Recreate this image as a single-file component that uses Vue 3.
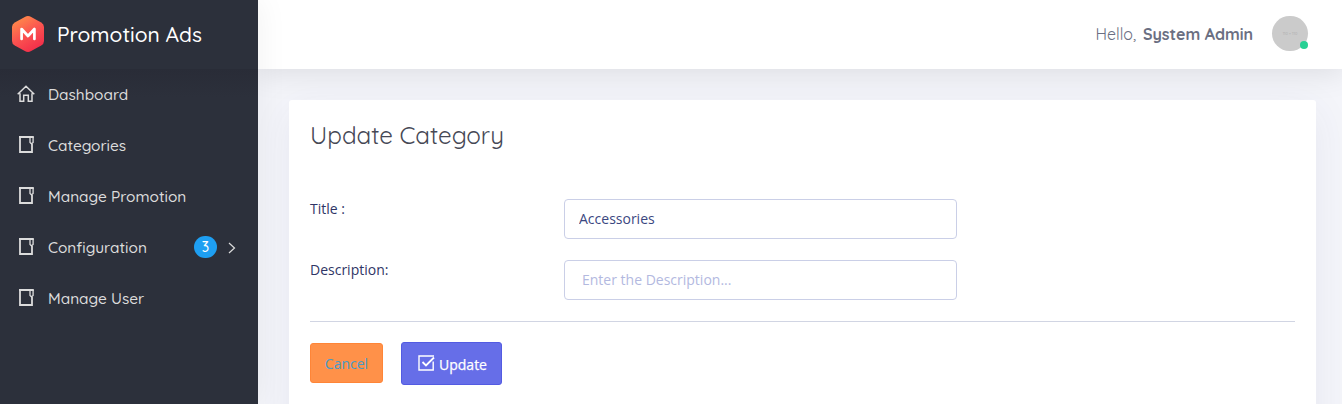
<script setup>
const items = [
  { label: 'Dashboard', icon: 'home' },
  { label: 'Categories', icon: 'book' },
  { label: 'Manage Promotion', icon: 'book' },
  { label: 'Configuration', icon: 'book', badge: 3 },
  { label: 'Manage User', icon: 'book' }
]
</script>

<template>
  <div class="app">
    <aside class="sidebar">
      <div class="brand">
        <svg class="logo" width="34" height="38" viewBox="0 0 34 38">
          <defs>
            <linearGradient id="brandFill" x1="0.15" y1="0" x2="0.7" y2="1">
              <stop offset="0" stop-color="#ff9149" />
              <stop offset="0.5" stop-color="#fb5550" />
              <stop offset="1" stop-color="#f22c4a" />
            </linearGradient>
          </defs>
          <path d="M13.8 1.9Q17 0.2 20.2 1.9L30.2 7.4Q33 9 33 12V26Q33 29 30.2 30.6L20.2 36.1Q17 37.8 13.8 36.1L3.8 30.6Q1 29 1 26V12Q1 9 3.8 7.4Z" fill="url(#brandFill)" />
          <path d="M10.6 24V14L17 21L23.4 14V24" fill="none" stroke="#fff" stroke-width="2.7" stroke-linecap="round" stroke-linejoin="round" />
        </svg>
        <span class="brand-text">Promotion Ads</span>
      </div>
      <nav class="menu">
        <a v-for="item in items" :key="item.label" class="menu-item">
          <svg v-if="item.icon === 'home'" class="icon" width="18" height="18" viewBox="0 0 18 18">
            <path d="M0.7 9.3L9 1.2L17.3 9.3M3 8.2V16.2H6.7V10.2H11.3V16.2H15V8.2" fill="none" stroke="#dcdcdc" stroke-width="1.5" />
          </svg>
          <svg v-else class="icon" width="18" height="18" viewBox="0 0 18 18">
            <path d="M2 1H16.8M3 1V16H15V8" fill="none" stroke="#dcdcdc" stroke-width="1.8" />
            <path d="M13 1V6.4L14.5 7.8L16.1 6.4V1" fill="none" stroke="#dcdcdc" stroke-width="1.3" />
          </svg>
          <span class="label">{{ item.label }}</span>
          <span v-if="item.badge" class="badge">{{ item.badge }}</span>
          <svg v-if="item.badge" class="chevron" width="8" height="12" viewBox="0 0 8 12">
            <path d="M1 1L6.5 6L1 11" fill="none" stroke="#dcdcdc" stroke-width="1.2" />
          </svg>
        </a>
      </nav>
    </aside>
    <div class="main">
      <header class="topbar">
        <span class="hello">Hello,</span>
        <span class="name">System Admin</span>
        <span class="avatar"><span class="size">110 × 110</span><i class="status"></i></span>
      </header>
      <section class="card">
        <h4 class="title">Update Category</h4>
        <form @submit.prevent>
          <div class="row">
            <label for="title">Title :</label>
            <input id="title" class="field" value="Accessories" />
          </div>
          <div class="row">
            <label for="desc">Description:</label>
            <input id="desc" class="field desc" placeholder="Enter the Description..." />
          </div>
          <div class="actions">
            <button type="button" class="btn cancel">Cancel</button>
            <button type="submit" class="btn update">
              <svg width="17" height="16" viewBox="0 0 17 16">
                <path d="M16 1H1V15H15.2V6.5" fill="none" stroke="#fff" stroke-width="1.4" />
                <path d="M4.5 7L8 10.5L16 2.5" fill="none" stroke="#fff" stroke-width="1.8" />
              </svg>
              <span>Update</span>
            </button>
          </div>
        </form>
      </section>
    </div>
  </div>
</template>

<style>
body { margin: 0; overflow: hidden; }
</style>

<style scoped>
* { box-sizing: border-box; }
.app { display: flex; width: 1342px; height: 404px; overflow: hidden; background: #f4f5fa; font-family: "Open Sans", sans-serif; font-size: 14px; }
.sidebar { width: 258px; flex: none; background: #2c303b; font-family: Quicksand, Lato, sans-serif; position: relative; z-index: 2; box-shadow: 1px 0 30px rgba(0, 0, 0, 0.06); }
.brand { height: 69px; display: flex; align-items: center; padding: 0 0 1px 11px; }
.brand-text { margin-left: 12px; font-size: 21px; font-weight: 500; color: #fff; white-space: nowrap; }
.menu { height: 335px; background: linear-gradient(#292c37, #2c303b 28px); }
.menu-item { display: flex; height: 51px; align-items: center; padding-left: 17px; color: #dcdcdc; font-size: 15.4px; font-weight: 500; white-space: nowrap; }
.icon { margin-right: 13px; flex: none; position: relative; top: -1px; }
.badge { margin: -1px 0 0 auto; width: 23px; height: 22px; border-radius: 11px; background: #1e9ff2; color: #fff; font-size: 14px; line-height: 22px; text-align: center; }
.chevron { margin: 0 22px 0 11px; }
.main { flex: 1; min-width: 0; }
.topbar { height: 69px; display: flex; align-items: center; justify-content: flex-end; padding: 0 34px 1px 0; background: #fff; font-family: Quicksand, Lato, sans-serif; font-size: 16px; color: #6b6f82; box-shadow: 0 2px 30px 2px rgba(0, 0, 0, 0.1); }
.hello { font-weight: 400; margin-right: 7px; }
.name { font-weight: 700; margin-right: 19px; }
.avatar { position: relative; width: 36px; height: 35px; border-radius: 18px; background: #cbcbcb; margin-top: -1px; display: flex; align-items: center; justify-content: center; }
.size { font-size: 4px; color: #aaa; white-space: nowrap; }
.status { position: absolute; right: 0; bottom: 2px; width: 8px; height: 8px; border-radius: 50%; background: #28d094; }
.card { position: relative; margin: 31px 26px 0 31px; height: 340px; background: #fff; border-radius: 3px; padding: 19px 21px; box-shadow: 0 10px 40px rgba(62, 57, 107, 0.07); }
.title { margin: 0; height: 80px; line-height: 32px; font-family: Quicksand, Lato, sans-serif; font-size: 24.2px; font-weight: 400; color: #464855; }
.row { display: flex; height: 61px; color: #2f3566; }
.row label { width: 254px; line-height: 20px; }
.field { width: 393px; height: 40px; border: 1px solid #cacfe7; border-radius: 4px; padding: 0 14px 2px; color: #3b4781; font: 14px "Open Sans", sans-serif; background: #fff; outline: none; }
.desc { padding-left: 17px; }
.field::placeholder { color: #b3b9df; opacity: 1; }
.actions { display: flex; align-items: flex-start; gap: 18px; border-top: 1px solid #d1d5e3; padding-top: 20px; }
.btn { display: flex; align-items: center; justify-content: center; padding: 0; border-radius: 3px; font: 14px "Open Sans", sans-serif; }
.cancel { width: 73px; height: 40px; margin-top: 1px; background: #ff9149; border: 1px solid #ff8537; color: #479bc7; }
.update { width: 101px; height: 43px; padding-top: 2px; background: #666ee8; border: 1px solid #535be2; color: #fff; gap: 4px; font-weight: 500; }
.update svg { position: relative; top: -2px; left: 1px; }
.update span { position: relative; left: 1px; -webkit-text-stroke: 0.25px #fff; }
</style>
